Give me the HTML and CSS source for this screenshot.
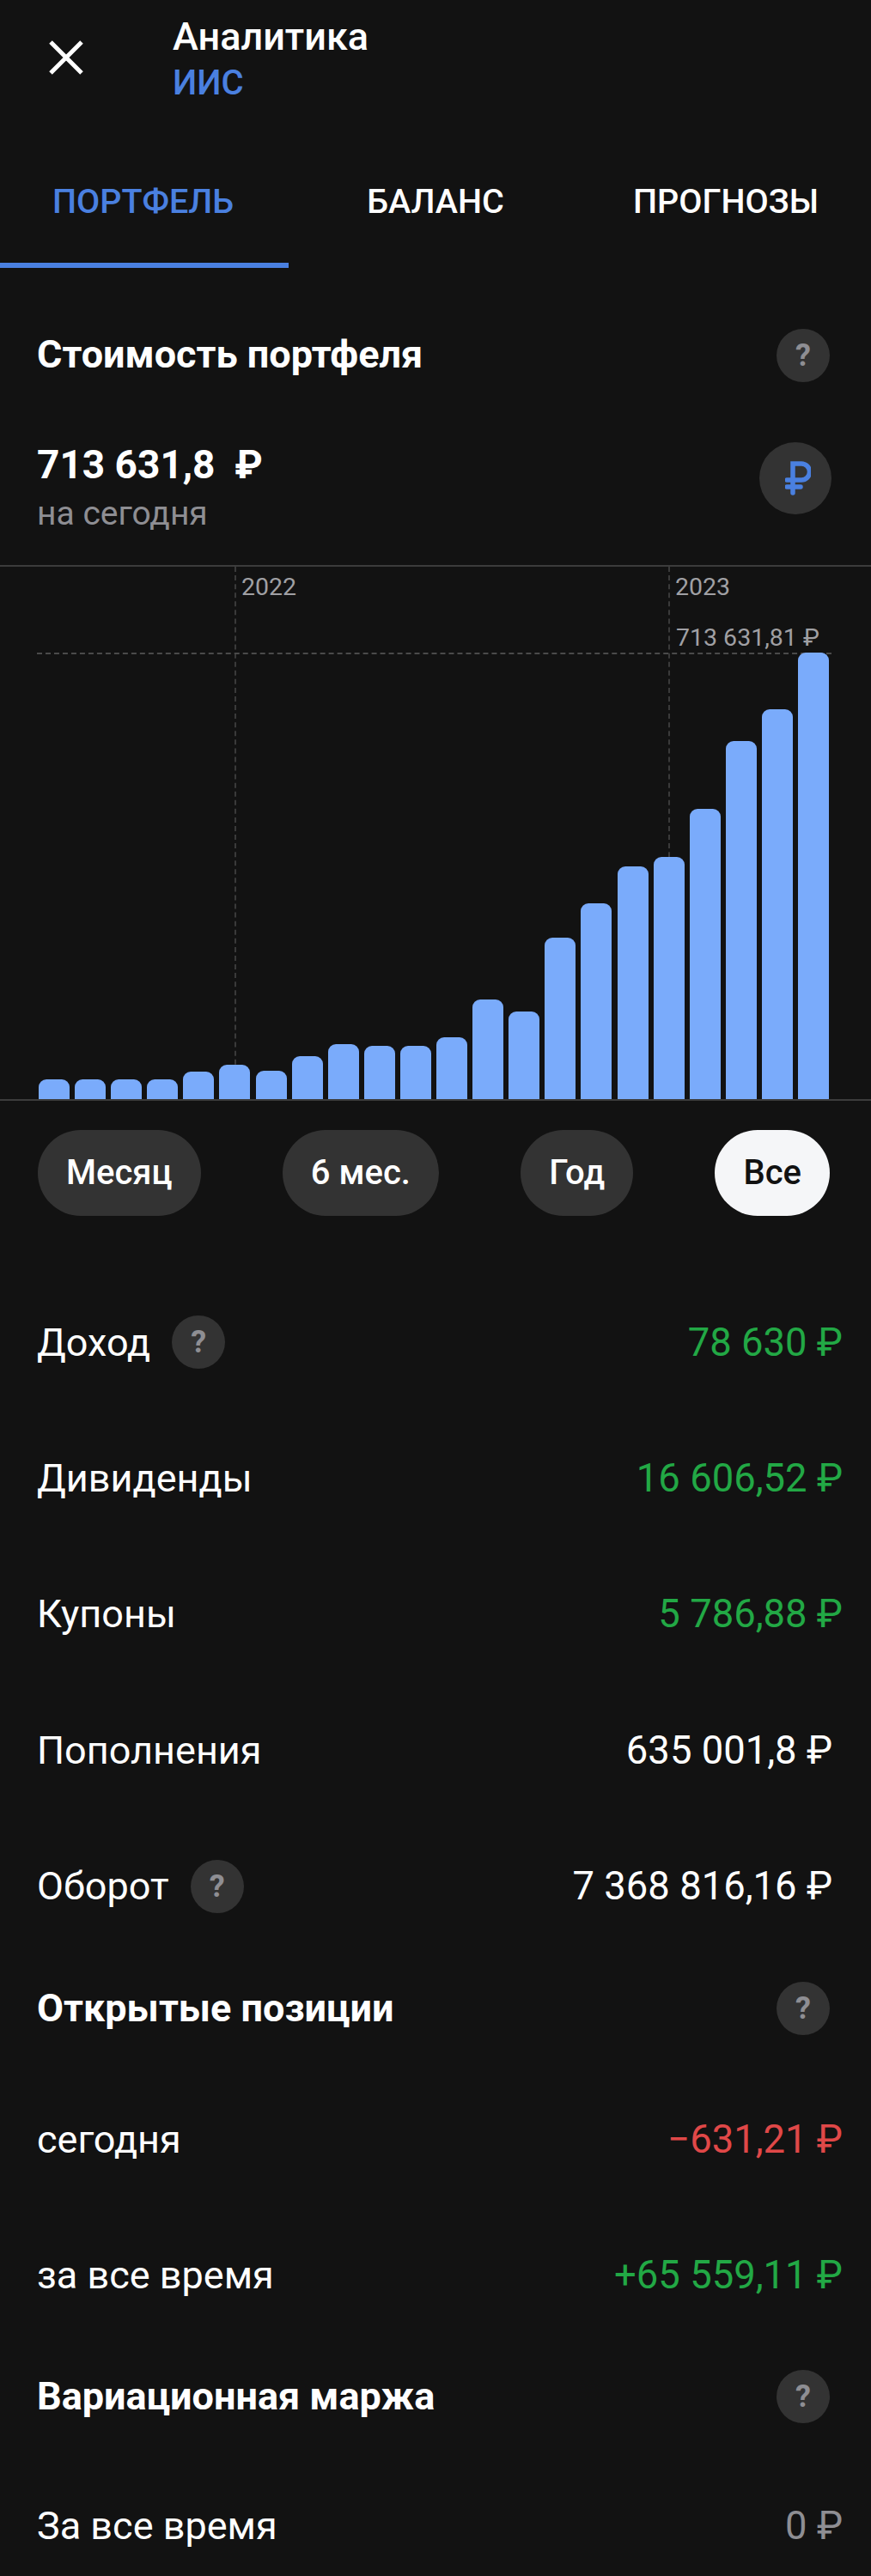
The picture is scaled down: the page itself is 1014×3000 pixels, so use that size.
FILE: index.html
```html
<!DOCTYPE html>
<html>

<head>
    <meta charset="utf-8">
    <link rel="stylesheet" href="styles.css">
</head>

<body>
    <div class="screen">
        <div class="topbar">
            <svg class="close" viewBox="0 0 40 40">
                <path d="M2 2L38 38M38 2L2 38" />
            </svg>
            <div class="topbar-text">
                <div class="topbar-title">Аналитика</div>
                <div class="topbar-sub">ИИС</div>
            </div>
        </div>

        <div class="tabs">
            <div class="tab active">ПОРТФЕЛЬ</div>
            <div class="tab">БАЛАНС</div>
            <div class="tab">ПРОГНОЗЫ</div>
        </div>

        <div class="head head-first">
            <div class="head-title">Стоимость портфеля</div>
            <div class="help">?</div>
        </div>

        <div class="total">
            <div class="total-text">
                <div class="total-value">713 631,8&nbsp; ₽</div>
                <div class="total-date">на сегодня</div>
            </div>
            <div class="currency">
                <svg class="currency-icon" viewBox="0 0 30 40">
                    <path d="M9 37V3H19A9.5 9.5 0 0 1 19 22H2M2 30H18" />
                </svg>
            </div>
        </div>

        <div class="chart">
            <div class="year year-a"><span>2022</span></div>
            <div class="year year-b"><span>2023</span></div>
            <div class="max-line"></div>
            <div class="max-label">713 631,81 ₽</div>
            <div class="bars">
                <div class="bar" style="height: 23px"></div>
                <div class="bar" style="height: 23px"></div>
                <div class="bar" style="height: 23px"></div>
                <div class="bar" style="height: 23px"></div>
                <div class="bar" style="height: 32px"></div>
                <div class="bar" style="height: 40px"></div>
                <div class="bar" style="height: 33px"></div>
                <div class="bar" style="height: 50px"></div>
                <div class="bar" style="height: 64px"></div>
                <div class="bar" style="height: 62px"></div>
                <div class="bar" style="height: 62px"></div>
                <div class="bar" style="height: 72px"></div>
                <div class="bar" style="height: 116px"></div>
                <div class="bar" style="height: 102px"></div>
                <div class="bar" style="height: 188px"></div>
                <div class="bar" style="height: 228px"></div>
                <div class="bar" style="height: 271px"></div>
                <div class="bar" style="height: 282px"></div>
                <div class="bar" style="height: 338px"></div>
                <div class="bar" style="height: 417px"></div>
                <div class="bar" style="height: 454px"></div>
                <div class="bar" style="height: 520px"></div>
            </div>
        </div>

        <div class="periods">
            <div class="period">Месяц</div>
            <div class="period">6 мес.</div>
            <div class="period">Год</div>
            <div class="period selected">Все</div>
        </div>

        <div class="rows">
            <div class="row">
                <div class="row-label">Доход <div class="help">?</div></div>
                <div class="row-value up">78 630 ₽</div>
            </div>
            <div class="row">
                <div class="row-label">Дивиденды</div>
                <div class="row-value up">16 606,52 ₽</div>
            </div>
            <div class="row">
                <div class="row-label">Купоны</div>
                <div class="row-value up">5 786,88 ₽</div>
            </div>
            <div class="row">
                <div class="row-label">Пополнения</div>
                <div class="row-value plain">635 001,8 ₽</div>
            </div>
            <div class="row">
                <div class="row-label">Оборот <div class="help">?</div></div>
                <div class="row-value plain">7 368 816,16 ₽</div>
            </div>
        </div>

        <div class="head head-open">
            <div class="head-title">Открытые позиции</div>
            <div class="help">?</div>
        </div>
        <div class="rows">
            <div class="row">
                <div class="row-label">сегодня</div>
                <div class="row-value down">−631,21 ₽</div>
            </div>
            <div class="row">
                <div class="row-label">за все время</div>
                <div class="row-value up">+65 559,11 ₽</div>
            </div>
        </div>

        <div class="head head-margin">
            <div class="head-title">Вариационная маржа</div>
            <div class="help">?</div>
        </div>
        <div class="rows">
            <div class="row">
                <div class="row-label">За все время</div>
                <div class="row-value muted">0 ₽</div>
            </div>
        </div>
    </div>
</body>

</html>
```

FILE: styles.css
```css
* {
    margin: 0;
    padding: 0;
    box-sizing: border-box;
}

body {
    background-color: #121212;
    color: #fff;
    font-family: Roboto, "Noto Sans", sans-serif;
}

.screen {
    height: 3000px;
    overflow: hidden;
}

/* top bar */
.topbar {
    display: flex;
    height: 130px;
    padding-left: 57px;
}

.close {
    width: 40px;
    height: 40px;
    margin-top: 47px;
    fill: none;
    stroke: #fff;
    stroke-width: 5;
}

.topbar-text {
    margin-left: 104px;
    padding-top: 18px;
}

.topbar-title {
    font-size: 45px;
    line-height: 50px;
    font-weight: 500;
}

.topbar-sub {
    margin-top: 4px;
    font-size: 40px;
    line-height: 50px;
    font-weight: 500;
    color: #4a80e0;
}

/* tabs */
.tabs {
    display: flex;
    height: 182px;
}

.tab {
    width: 338px;
    padding: 80px 0 0 4px;
    line-height: 50px;
    font-size: 39.5px;
    font-weight: 500;
    text-align: center;
    border-bottom: 6px solid transparent;
}

.tab.active {
    width: 336px;
    padding: 80px 3px 0 0;
    color: #4a80e0;
    border-bottom-color: #4a80e0;
}

/* section heads */
.head {
    display: flex;
    justify-content: space-between;
    align-items: center;
    padding: 0 48px 0 43px;
}

.head-first {
    margin-top: 71px;
}

.head-first .head-title {
    padding-bottom: 4px;
}

.head-open {
    margin-top: 32px;
    margin-bottom: 42px;
}

.head-margin {
    margin-top: 31px;
    margin-bottom: 41px;
}

.head-title {
    font-size: 45px;
    font-weight: 700;
}

.help {
    width: 62px;
    height: 62px;
    border-radius: 50%;
    background-color: #333;
    color: #8e8e93;
    font-size: 36px;
    font-weight: 700;
    line-height: 62px;
    text-align: center;
}

/* total */
.total {
    display: flex;
    justify-content: space-between;
    align-items: flex-start;
    margin-top: 70px;
    height: 85px;
    padding: 0 46px 0 43px;
}

.total-text {
    padding-top: 1px;
}

.total-value {
    font-size: 46px;
    font-weight: 700;
    line-height: 50px;
}

.total-date {
    margin-top: 9px;
    font-size: 39px;
    line-height: 46px;
    color: #8e8e93;
}

.currency {
    display: flex;
    justify-content: center;
    align-items: center;
    width: 84px;
    height: 84px;
    border-radius: 50%;
    background-color: #333;
}

.currency-icon {
    width: 30px;
    height: 40px;
    margin-left: 6px;
    fill: none;
    stroke: #4a80e0;
    stroke-width: 5.5;
    stroke-linecap: round;
}

/* chart */
.chart {
    position: relative;
    height: 624px;
    margin-top: 58px;
    border-top: 2px solid #3c3c3c;
    border-bottom: 2px solid #3c3c3c;
}

.bars {
    position: relative;
    display: flex;
    align-items: flex-end;
    gap: 6.1px;
    height: 100%;
    padding-left: 45px;
}

.bar {
    width: 36px;
    background-color: #7aabfb;
    border-radius: 9px 9px 0 0;
}

.year {
    position: absolute;
    top: 0;
    bottom: 0;
    border-left: 2px dashed #3a3a3a;
    padding: 8px 0 0 6px;
    font-size: 28.5px;
    line-height: 32px;
    color: #a0a0a4;
}

.year-a {
    left: 273px;
}

.year-b {
    left: 778px;
}

.max-line {
    position: absolute;
    top: 100px;
    left: 43px;
    width: 925px;
    border-top: 2px dashed #4a4a4a;
}

.max-label {
    position: absolute;
    top: 67px;
    left: 787px;
    font-size: 28.5px;
    line-height: 32px;
    color: #a0a0a4;
}

/* periods */
.periods {
    display: flex;
    justify-content: space-between;
    margin-top: 34px;
    padding: 0 48px 0 44px;
}

.period {
    height: 100px;
    padding: 0 33px;
    border-radius: 50px;
    background-color: #333;
    font-size: 40px;
    font-weight: 500;
    line-height: 100px;
}

.period.selected {
    background-color: #f5f6f8;
    color: #121212;
}

/* rows */
.rows {
    display: flex;
    flex-direction: column;
}

.periods + .rows {
    margin-top: 68px;
}

.row {
    display: flex;
    justify-content: space-between;
    align-items: center;
    height: 158.4px;
    padding: 0 33px 0 43px;
}

.row-label {
    display: flex;
    align-items: center;
    gap: 25px;
    font-size: 45px;
}

.row-value {
    font-size: 45.4px;
}

.up {
    color: #22a845;
}

.down {
    color: #e04848;
}

.plain {
    padding-right: 12px;
}

.muted {
    color: #8e8e93;
}
```
